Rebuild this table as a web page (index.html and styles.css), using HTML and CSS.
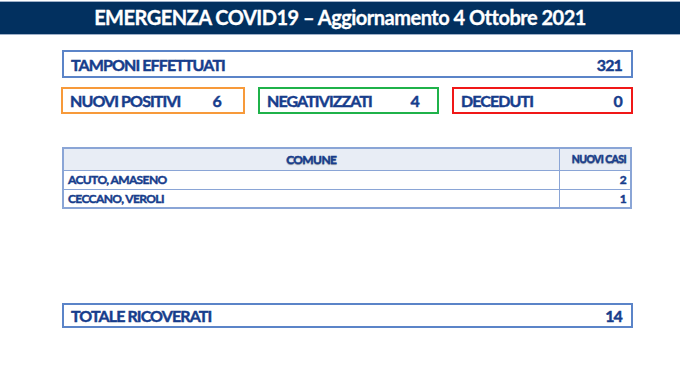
FILE: index.html
```html
<!DOCTYPE html>
<html lang="it">
<head>
    <meta charset="UTF-8">
    <title>Emergenza COVID19</title>
    <link rel="stylesheet" href="styles.css">
</head>
<body>
    <div class="header">EMERGENZA COVID19 – Aggiornamento 4 Ottobre 2021</div>
    <div class="main">
        <div class="box blue">
            <span>TAMPONI EFFETTUATI</span>
            <span>321</span>
        </div>
        <div class="row">
            <div class="box orange">
                <span>NUOVI POSITIVI</span>
                <span>6</span>
            </div>
            <div class="box green">
                <span>NEGATIVIZZATI</span>
                <span>4</span>
            </div>
            <div class="box red">
                <span>DECEDUTI</span>
                <span>0</span>
            </div>
        </div>
        <table class="cases">
            <tr>
                <th class="comune">COMUNE</th>
                <th class="num">NUOVI CASI</th>
            </tr>
            <tr>
                <td>ACUTO, AMASENO</td>
                <td class="num">2</td>
            </tr>
            <tr>
                <td>CECCANO, VEROLI</td>
                <td class="num">1</td>
            </tr>
        </table>
        <div class="box blue total">
            <span>TOTALE RICOVERATI</span>
            <span>14</span>
        </div>
    </div>
</body>
</html>
```

FILE: styles.css
```css
*{
    margin: 0;
    padding: 0;
    box-sizing: border-box;
}
body{
    background: white;
    font-family: Lato, "Open Sans", sans-serif;
    font-weight: bold;
    color: #173d8c;
    -webkit-text-stroke: 0.45px currentColor;
}
.header{
    margin-top: 1px;
    height: 34px;
    background: #02305f;
    border-top: 1px solid #9fb0c8;
    border-bottom: 1px solid #9fb0c8;
    color: white;
    font-size: 20px;
    letter-spacing: -0.5px;
    text-align: center;
    line-height: 31px;
    -webkit-text-stroke: 0.3px currentColor;
}
.main{
    width: 571px;
    margin: 15px 0 0 62px;
}
.box{
    display: flex;
    justify-content: space-between;
    align-items: center;
    height: 28px;
    padding: 0 9px 0 7px;
    border: 2px solid #5b84c8;
    font-size: 16px;
    letter-spacing: -0.9px;
}
.row{
    display: flex;
    justify-content: space-between;
    margin-top: 9px;
}
.row .box{
    width: 181px;
    height: 27px;
    margin-left: -1px;
}
.row .box.orange{
    width: 184px;
    padding-right: 22px;
}
.row .box.green{
    padding-right: 18px;
}
.orange{
    border-color: #f79a3a;
}
.green{
    border-color: #1fb24a;
}
.red{
    border-color: #f01818;
}
.cases{
    width: 570px;
    margin-top: 33px;
    border-collapse: collapse;
    border: 2px solid #8aa5d6;
    font-size: 12px;
    letter-spacing: -0.6px;
}
.cases th,
.cases td{
    border: 1px solid #8aa5d6;
    height: 19px;
    padding: 0 4px;
    text-align: left;
}
.cases th{
    height: 22px;
    background: #e8edf5;
    text-shadow: 0 1px 1px rgba(0,0,0,0.35);
}
.cases th.comune{
    text-align: center;
}
.cases th.num{
    width: 72px;
    font-size: 10.5px;
}
.cases .num{
    text-align: right;
}
.total{
    margin-top: 94px;
    height: 25px;
}
```
